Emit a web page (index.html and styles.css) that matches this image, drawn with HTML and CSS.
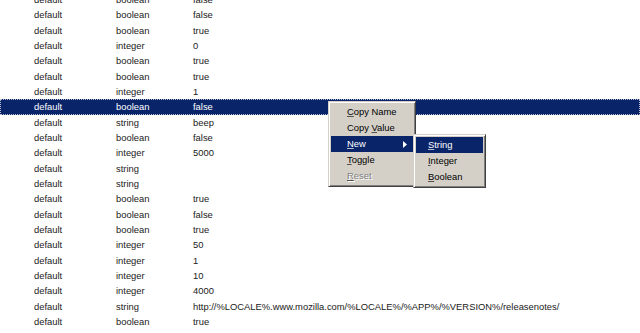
FILE: index.html
```html
<!DOCTYPE html>
<html>
<head>
<meta charset="utf-8">
<link rel="stylesheet" href="styles.css">
</head>
<body>
<div class="list">
  <div class="row"><span>default</span><span>boolean</span><span>false</span></div>
  <div class="row"><span>default</span><span>boolean</span><span>false</span></div>
  <div class="row"><span>default</span><span>boolean</span><span>true</span></div>
  <div class="row"><span>default</span><span>integer</span><span>0</span></div>
  <div class="row"><span>default</span><span>boolean</span><span>true</span></div>
  <div class="row"><span>default</span><span>boolean</span><span>true</span></div>
  <div class="row"><span>default</span><span>integer</span><span>1</span></div>
  <div class="row selected"><span>default</span><span>boolean</span><span>false</span></div>
  <div class="row"><span>default</span><span>string</span><span>beep</span></div>
  <div class="row"><span>default</span><span>boolean</span><span>false</span></div>
  <div class="row"><span>default</span><span>integer</span><span>5000</span></div>
  <div class="row"><span>default</span><span>string</span><span></span></div>
  <div class="row"><span>default</span><span>string</span><span></span></div>
  <div class="row"><span>default</span><span>boolean</span><span>true</span></div>
  <div class="row"><span>default</span><span>boolean</span><span>false</span></div>
  <div class="row"><span>default</span><span>boolean</span><span>true</span></div>
  <div class="row"><span>default</span><span>integer</span><span>50</span></div>
  <div class="row"><span>default</span><span>integer</span><span>1</span></div>
  <div class="row"><span>default</span><span>integer</span><span>10</span></div>
  <div class="row"><span>default</span><span>integer</span><span>4000</span></div>
  <div class="row"><span>default</span><span>string</span><span>http://%LOCALE%.www.mozilla.com/%LOCALE%/%APP%/%VERSION%/releasenotes/</span></div>
  <div class="row"><span>default</span><span>boolean</span><span>true</span></div>
</div>

<div class="menu main-menu">
  <div class="item"><u>C</u>opy Name</div>
  <div class="item">Copy <u>V</u>alue</div>
  <div class="item active"><u>N</u>ew<svg class="arrow" width="4" height="7" viewBox="0 0 4 7"><path d="M0 0 L4 3.5 L0 7 Z" fill="#fff"/></svg></div>
  <div class="item"><u>T</u>oggle</div>
  <div class="item disabled"><u>R</u>eset</div>
</div>

<div class="menu sub-menu">
  <div class="item active"><u>S</u>tring</div>
  <div class="item"><u>I</u>nteger</div>
  <div class="item"><u>B</u>oolean</div>
</div>
</body>
</html>
```

FILE: styles.css
```css
html, body {
  margin: 0;
  padding: 0;
  background: #ffffff;
  overflow: hidden;
  width: 640px;
  height: 333px;
}

body {
  position: relative;
  font-family: "Liberation Sans", Arial, sans-serif;
  font-size: 9.4px;
  color: #1a1a1a;
}

.list {
  margin-top: -8px;
}

.row {
  display: grid;
  grid-template-columns: 34px 82px 77px 1fr;
  height: 15.33px;
  line-height: 15.33px;
  white-space: nowrap;
}

.row span:first-child {
  grid-column: 2;
}

.row span:nth-child(2) {
  grid-column: 3;
}

.row span:nth-child(3) {
  grid-column: 4;
}

.row.selected {
  background: #0a246a;
  color: #ffffff;
  outline: 1px dotted #b8bccc;
  outline-offset: -1px;
}

.menu {
  position: absolute;
  background: #d4d0c8;
  border: 1px solid;
  border-color: #d4d0c8 #404040 #404040 #d4d0c8;
  box-shadow: inset 1px 1px 0 #ffffff, inset -1px -1px 0 #808080;
  padding: 2px;
  color: #000000;
}

.main-menu {
  left: 328px;
  top: 101px;
  width: 82px;
}

.sub-menu {
  left: 413px;
  top: 134px;
  width: 67px;
}

.item {
  position: relative;
  height: 16px;
  line-height: 16px;
  padding-left: 16px;
  white-space: nowrap;
}

.sub-menu .item {
  padding-left: 12px;
}

.item u {
  text-decoration-color: rgba(0, 0, 0, 0.6);
}

.item.active {
  background: #0a246a;
  color: #ffffff;
}

.item.active u {
  text-decoration-color: rgba(255, 255, 255, 0.7);
}

.item.disabled {
  color: #808080;
  text-shadow: 1px 1px 0 #ffffff;
}

.arrow {
  position: absolute;
  right: 6px;
  top: 4.5px;
}
```
